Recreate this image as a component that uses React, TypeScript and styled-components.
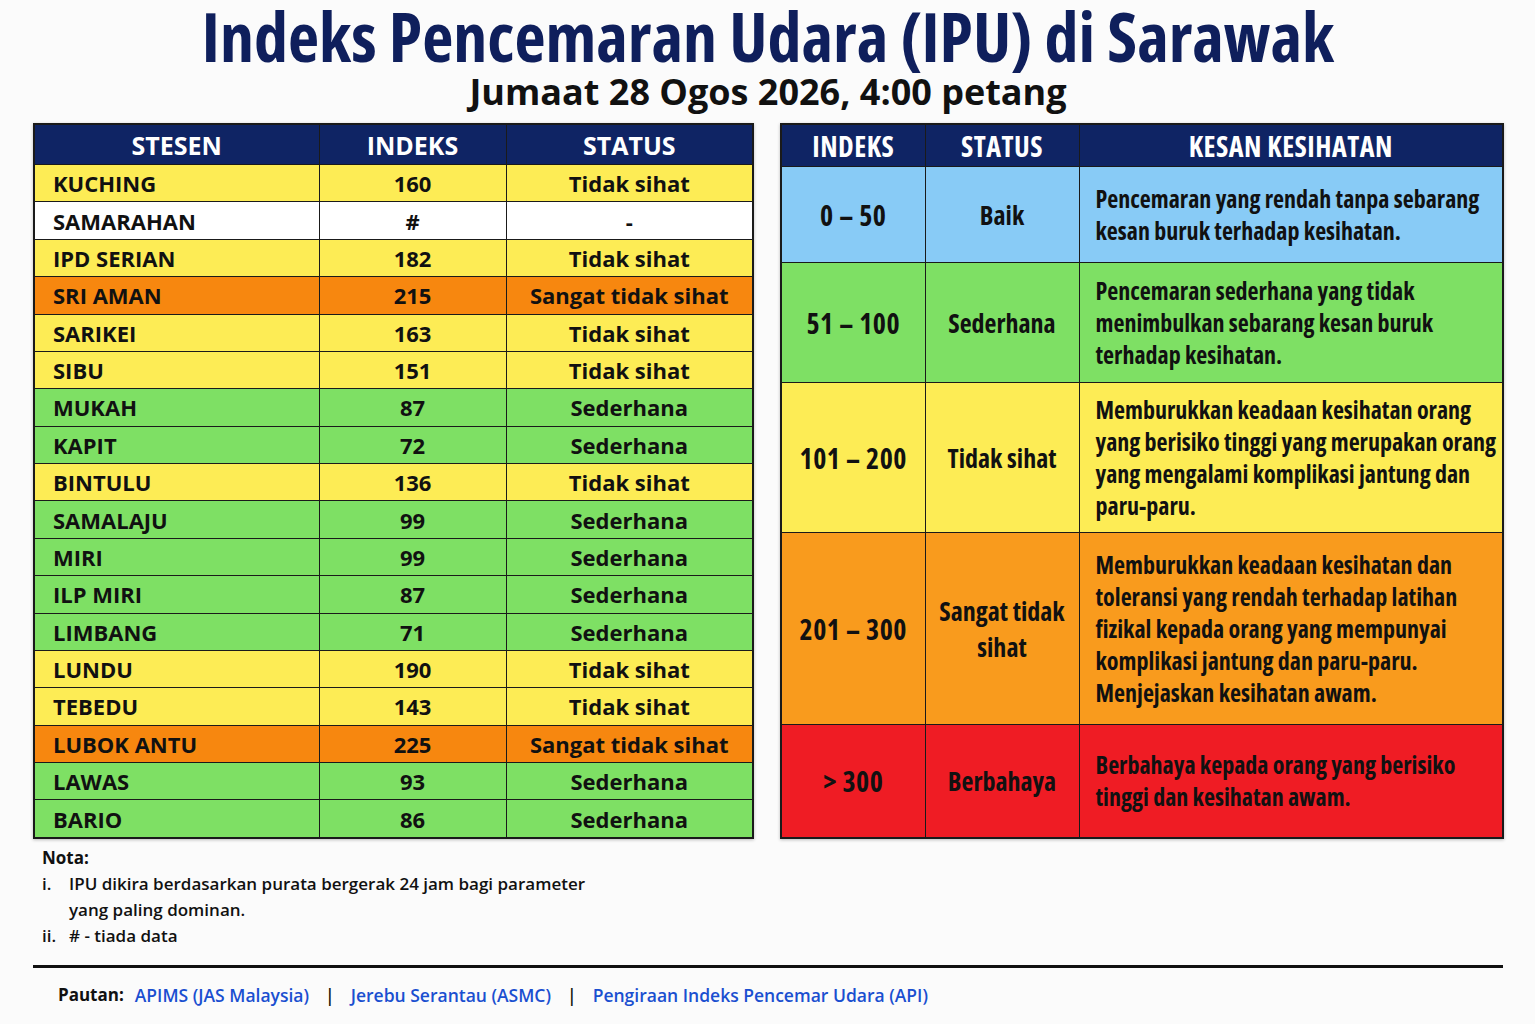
import React, { FC } from 'react';
import styled, { createGlobalStyle } from 'styled-components';

const GlobalStyle = createGlobalStyle`
    body {
        margin: 0;
        background: #fbfbfb;
        font-family: "Open Sans", "DejaVu Sans Condensed", sans-serif;
        font-stretch: 75%;
        color: #111;
    }
`;

const colors: Record<string, string> = {
    yellow: '#fdec55',
    orange: '#f7870f',
    amber: '#f99b1d',
    green: '#7ee064',
    blue: '#88cbf6',
    red: '#ef1c24',
    white: '#ffffff',
};

const Page = styled.div`
    width: 1535px;
    padding: 1px 32px 0 33px;
    box-sizing: border-box;
`;

const Title = styled.h1`
    margin: 0;
    text-align: center;
    font-size: 68px;
    line-height: 70px;
    font-weight: 700;
    color: #0f1f5c;
`;

const SubTitle = styled.h2`
    margin: 0;
    text-align: center;
    font-size: 36px;
    font-stretch: 100%;
    line-height: 42px;
    font-weight: 700;
    color: #111;
`;

const Tables = styled.div`
    display: flex;
    gap: 26px;
    margin-top: 10px;
`;

const Table = styled.table<{ $width: number }>`
    width: ${(p) => p.$width}px;
    border-collapse: collapse;
    table-layout: fixed;
    border: 2px solid #1a1a1a;
    box-shadow: 0 1px 3px rgba(0, 0, 0, 0.25);
`;

const Head = styled.th<{ $height: number }>`
    background: #0f2464;
    color: #fff;
    font-size: 28px;
    letter-spacing: 0.5px;
    line-height: 30px;
    font-weight: 700;
    height: ${(p) => p.$height}px;
    padding: 0;
    border: 1.5px solid #1a1a1a;
    text-align: center;
`;

const WideHead = styled(Head)`
    font-size: 25px;
    font-stretch: 100%;
    letter-spacing: 0;
`;

const Cell = styled.td<{ $bg: string; $align?: string }>`
    background: ${(p) => colors[p.$bg]};
    text-align: ${(p) => p.$align || 'center'};
    padding: ${(p) => (p.$align === 'left' ? '0 0 0 18px' : '0')};
    border: 1.5px solid #1a1a1a;
    font-size: 22px;
    font-stretch: 100%;
    line-height: 30px;
    font-weight: 700;
    height: 35.4px;
    white-space: nowrap;
`;

const RangeCell = styled.td<{ $bg: string; $height: number }>`
    background: ${(p) => colors[p.$bg]};
    height: ${(p) => p.$height}px;
    border: 1.5px solid #1a1a1a;
    text-align: center;
    font-size: 28px;
    letter-spacing: 0.5px;
    font-weight: 700;
    line-height: 36px;
    padding: 0 6px;
`;

const StatusCell = styled(RangeCell)`
    font-size: 26px;
    letter-spacing: 0;
`;

const Effect = styled.td<{ $bg: string }>`
    background: ${(p) => colors[p.$bg]};
    border: 1.5px solid #1a1a1a;
    font-size: 24px;
    font-weight: 700;
    line-height: 32px;
    padding: 0 4px 0 16px;
    text-align: left;
    white-space: nowrap;
`;

const Notes = styled.div`
    margin-top: 6px;
    padding-left: 9px;
    font-size: 17px;
    font-stretch: 100%;
    font-weight: 600;
    line-height: 26px;
`;

const NoteTitle = styled.div`
    font-weight: 700;
`;

const NoteList = styled.ol`
    margin: 0;
    padding: 0;
    list-style: none;
    width: 572px;
`;

const NoteItem = styled.li`
    display: flex;
`;

const NoteMark = styled.span`
    width: 27px;
    flex: none;
`;

const Rule = styled.hr`
    margin: 16px 0 0 0;
    border: none;
    border-top: 3px solid #111;
`;

const Links = styled.div`
    display: flex;
    align-items: center;
    gap: 16px;
    padding: 14px 0 0 25px;
    font-size: 17.5px;
    font-stretch: 100%;
    line-height: 26px;
    font-weight: 700;
`;

const Label = styled.span`
    font-size: 17px;
    margin-right: -5px;
`;

const LinkText = styled.a`
    color: #1a4fd0;
    text-decoration: none;
    font-weight: 600;
`;

const Sep = styled.span`
    font-weight: 600;
`;

type Station = [string, string, string, string];

const stations: Station[] = [
    ['KUCHING', '160', 'Tidak sihat', 'yellow'],
    ['SAMARAHAN', '#', '-', 'white'],
    ['IPD SERIAN', '182', 'Tidak sihat', 'yellow'],
    ['SRI AMAN', '215', 'Sangat tidak sihat', 'orange'],
    ['SARIKEI', '163', 'Tidak sihat', 'yellow'],
    ['SIBU', '151', 'Tidak sihat', 'yellow'],
    ['MUKAH', '87', 'Sederhana', 'green'],
    ['KAPIT', '72', 'Sederhana', 'green'],
    ['BINTULU', '136', 'Tidak sihat', 'yellow'],
    ['SAMALAJU', '99', 'Sederhana', 'green'],
    ['MIRI', '99', 'Sederhana', 'green'],
    ['ILP MIRI', '87', 'Sederhana', 'green'],
    ['LIMBANG', '71', 'Sederhana', 'green'],
    ['LUNDU', '190', 'Tidak sihat', 'yellow'],
    ['TEBEDU', '143', 'Tidak sihat', 'yellow'],
    ['LUBOK ANTU', '225', 'Sangat tidak sihat', 'orange'],
    ['LAWAS', '93', 'Sederhana', 'green'],
    ['BARIO', '86', 'Sederhana', 'green'],
];

const ranges = [
    { range: '0 – 50', status: 'Baik', bg: 'blue', h: 95, text: ['Pencemaran yang rendah tanpa sebarang', 'kesan buruk terhadap kesihatan.'] },
    { range: '51 – 100', status: 'Sederhana', bg: 'green', h: 119, text: ['Pencemaran sederhana yang tidak', 'menimbulkan sebarang kesan buruk', 'terhadap kesihatan.'] },
    { range: '101 – 200', status: 'Tidak sihat', bg: 'yellow', h: 149, text: ['Memburukkan keadaan kesihatan orang', 'yang berisiko tinggi yang merupakan orang', 'yang mengalami komplikasi jantung dan', 'paru-paru.'] },
    { range: '201 – 300', status: 'Sangat tidak sihat', bg: 'amber', h: 191, text: ['Memburukkan keadaan kesihatan dan', 'toleransi yang rendah terhadap latihan', 'fizikal kepada orang yang mempunyai', 'komplikasi jantung dan paru-paru.', 'Menjejaskan kesihatan awam.'] },
    { range: '> 300', status: 'Berbahaya', bg: 'red', h: 112, text: ['Berbahaya kepada orang yang berisiko', 'tinggi dan kesihatan awam.'] },
];

const App: FC = () => {
    return (
        <Page>
            <GlobalStyle />
            <Title>Indeks Pencemaran Udara (IPU) di Sarawak</Title>
            <SubTitle>Jumaat 28 Ogos 2026, 4:00 petang</SubTitle>
            <Tables>
                <Table $width={719}>
                    <colgroup>
                        <col style={{ width: 285 }} />
                        <col style={{ width: 187 }} />
                        <col style={{ width: 247 }} />
                    </colgroup>
                    <thead>
                        <tr>
                            <WideHead $height={39}>STESEN</WideHead>
                            <WideHead $height={39}>INDEKS</WideHead>
                            <WideHead $height={39}>STATUS</WideHead>
                        </tr>
                    </thead>
                    <tbody>
                        {stations.map(([name, idx, status, bg]) => (
                            <tr key={name}>
                                <Cell $bg={bg} $align="left">{name}</Cell>
                                <Cell $bg={bg}>{idx}</Cell>
                                <Cell $bg={bg}>{status}</Cell>
                            </tr>
                        ))}
                    </tbody>
                </Table>
                <Table $width={722}>
                    <colgroup>
                        <col style={{ width: 144 }} />
                        <col style={{ width: 154 }} />
                        <col style={{ width: 424 }} />
                    </colgroup>
                    <thead>
                        <tr>
                            <Head $height={41}>INDEKS</Head>
                            <Head $height={41}>STATUS</Head>
                            <Head $height={41}>KESAN KESIHATAN</Head>
                        </tr>
                    </thead>
                    <tbody>
                        {ranges.map((r) => (
                            <tr key={r.range}>
                                <RangeCell $bg={r.bg} $height={r.h}>{r.range}</RangeCell>
                                <StatusCell $bg={r.bg} $height={r.h}>{r.status}</StatusCell>
                                <Effect $bg={r.bg}>
                                    {r.text.map((line) => (
                                        <div key={line}>{line}</div>
                                    ))}
                                </Effect>
                            </tr>
                        ))}
                    </tbody>
                </Table>
            </Tables>
            <Notes>
                <NoteTitle>Nota:</NoteTitle>
                <NoteList>
                    <NoteItem>
                        <NoteMark>i.</NoteMark>
                        <span>IPU dikira berdasarkan purata bergerak 24 jam bagi parameter yang paling dominan.</span>
                    </NoteItem>
                    <NoteItem>
                        <NoteMark>ii.</NoteMark>
                        <span># - tiada data</span>
                    </NoteItem>
                </NoteList>
            </Notes>
            <Rule />
            <Links>
                <Label>Pautan:</Label>
                <LinkText href="#">APIMS (JAS Malaysia)</LinkText>
                <Sep>|</Sep>
                <LinkText href="#">Jerebu Serantau (ASMC)</LinkText>
                <Sep>|</Sep>
                <LinkText href="#">Pengiraan Indeks Pencemar Udara (API)</LinkText>
            </Links>
        </Page>
    );
};

export default App;
